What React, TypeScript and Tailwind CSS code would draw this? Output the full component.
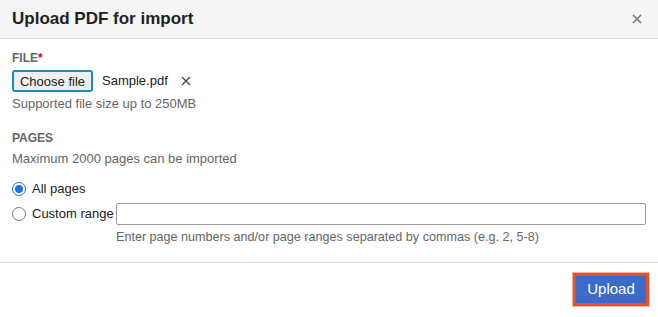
import React from "react";

export default function App() {
  return (
    <div className="w-[658px] h-[317px] bg-white text-[#333] overflow-hidden" style={{ fontFamily: '"Liberation Sans", Arial, sans-serif' }}>
      <div className="h-[39px] bg-[#f5f5f5] border-b border-[#dcdcdc] flex items-center justify-between pl-3 pr-[16px]">
        <div className="text-[17px] font-bold text-[#222]">Upload PDF for import</div>
        <svg width="10" height="10" viewBox="0 0 10 10" className="text-[#777]">
          <path d="M1 1L9 9M9 1L1 9" stroke="currentColor" strokeWidth="1.6" />
        </svg>
      </div>
      <div className="px-3 pt-[12px] h-[224px] border-b border-[#dcdcdc]">
        <div className="text-[12px] font-bold text-[#666] leading-[14px]">
          FILE<span className="text-[#d0021b]">*</span>
        </div>
        <div className="flex items-center mt-[5px] h-[22px]">
          <button className="h-[22px] w-[81px] shrink-0 rounded-[3px] border-2 border-[#1c8cc0] bg-[#efefef] text-[13px] text-[#222] leading-none">
            Choose file
          </button>
          <span className="ml-[9px] text-[13px] text-[#222] whitespace-nowrap">Sample.pdf</span>
          <svg width="10" height="10" viewBox="0 0 10 10" className="ml-[13px] text-[#444] shrink-0">
            <path d="M1 1L9 9M9 1L1 9" stroke="currentColor" strokeWidth="1.4" />
          </svg>
        </div>
        <div className="text-[13px] text-[#666] mt-[4px] leading-[16px]">Supported file size up to 250MB</div>
        <div className="text-[12px] font-bold text-[#666] leading-[14px] mt-[19px]">PAGES</div>
        <div className="text-[13px] text-[#666] mt-[6px] leading-[16px]">Maximum 2000 pages can be imported</div>
        <div className="flex items-center mt-[14px] h-[16px]">
          <span className="w-[14px] h-[14px] shrink-0 rounded-full border border-[#1a73e8] flex items-center justify-center bg-white">
            <span className="w-[8px] h-[8px] rounded-full bg-[#1a73e8]" />
          </span>
          <span className="ml-[6px] text-[13px] text-[#222] whitespace-nowrap">All pages</span>
        </div>
        <div className="flex items-center mt-[6px] h-[22px]">
          <span className="w-[14px] h-[14px] shrink-0 rounded-full border border-[#777] bg-white" />
          <span className="ml-[6px] text-[13px] text-[#222] whitespace-nowrap w-[84px] shrink-0">Custom range</span>
          <input className="flex-1 min-w-0 h-[22px] border border-[#999] rounded-[2px] outline-none" />
        </div>
        <div className="ml-[104px] mt-[5px] text-[12.6px] text-[#666] leading-[15px] whitespace-nowrap">
          Enter page numbers and/or page ranges separated by commas (e.g. 2, 5-8)
        </div>
      </div>
      <div className="flex justify-end pr-[9px] pt-[10px]">
        <button className="w-[76px] h-[33px] bg-[#3d6bcc] text-white text-[15px] border-[3px] border-[#e0552f] ring-1 ring-[#f3b8a6]">
          Upload
        </button>
      </div>
    </div>
  );
}
